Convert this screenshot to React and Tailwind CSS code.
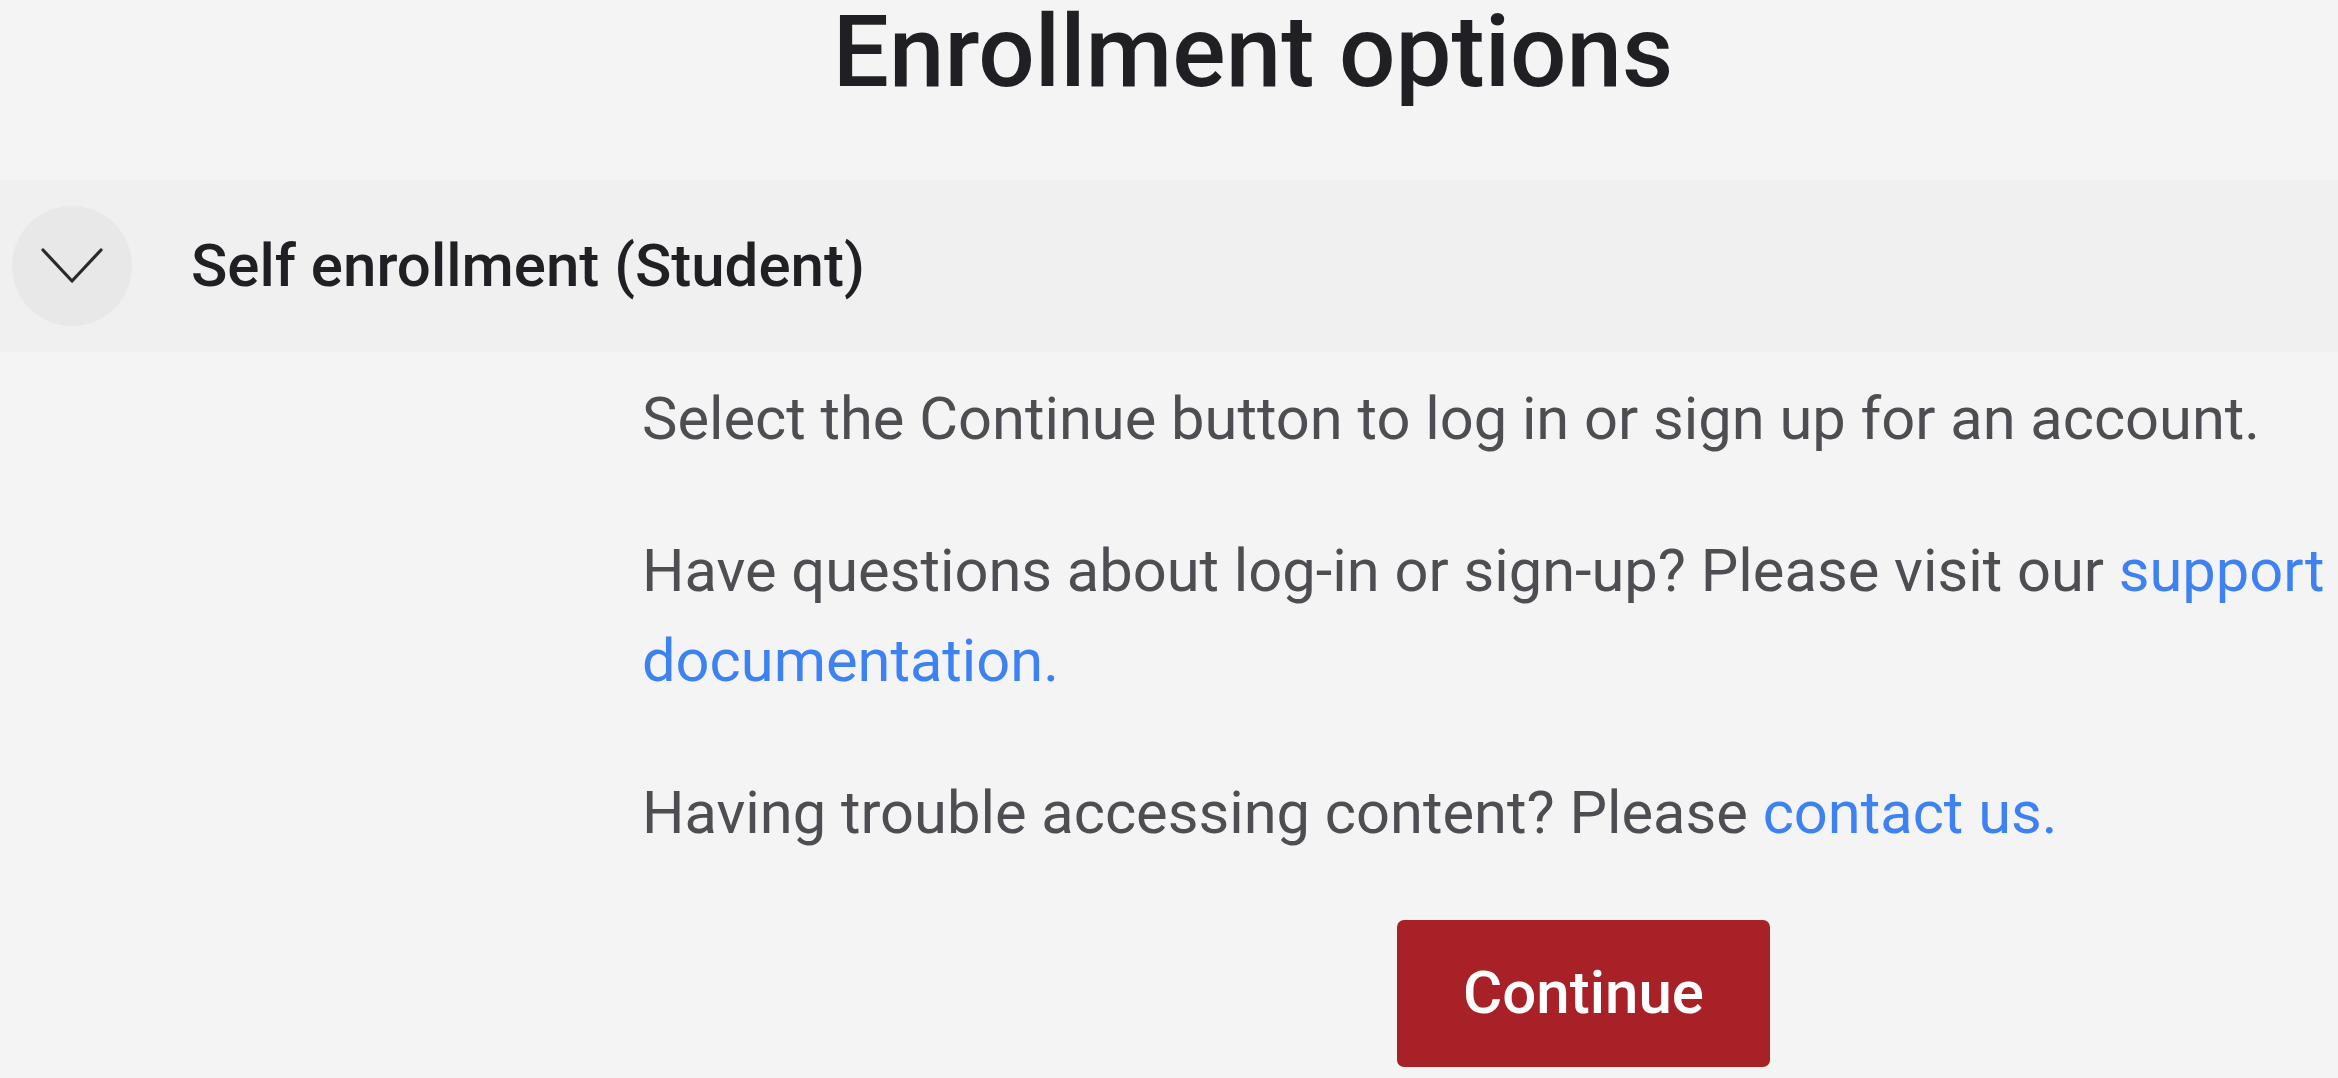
import React from "react";

const ChevronDown = () => (
  <svg width="62" height="36" viewBox="0 0 62 36" fill="none">
    <path d="M2 2 L31 33 L60 2" stroke="#2a2a2e" strokeWidth="3.2" strokeLinecap="round" strokeLinejoin="round" />
  </svg>
);

const App = () => {
  return (
    <div className="w-[2338px] h-[1078px] overflow-hidden bg-[#f4f4f4] font-['Roboto',sans-serif]">
      {/* page title */}
      <div className="flex justify-center pl-[168px] pt-[3px]">
        <h1 className="text-[99.6px] leading-none font-medium text-[#1f1f24]">Enrollment options</h1>
      </div>

      {/* accordion header */}
      <div className="mt-[77px] h-[172px] bg-[#f0f0f0] flex items-center pl-[12px]">
        <button className="w-[120px] h-[120px] rounded-full bg-[#e8e8e8] flex items-center justify-center">
          <ChevronDown />
        </button>
        <span className="ml-[59px] text-[60px] font-medium text-[#1f1f24]">Self enrollment (Student)</span>
      </div>

      {/* accordion body */}
      <div className="pl-[642px] pt-[22px] flex flex-col gap-[62px] text-[59.6px] leading-[90px] text-[#4d4d52]">
        <p>Select the Continue button to log in or sign up for an account.</p>
        <p>
          Have questions about log-in or sign-up? Please visit our{" "}
          <a href="#" className="text-[#3d82f0]">support documentation.</a>
        </p>
        <p>
          Having trouble accessing content? Please <a href="#" className="text-[#3d82f0]">contact us.</a>
        </p>
        <div className="pl-[755px]">
          <button className="w-[373px] h-[147px] rounded-[7px] bg-[#a82126] text-white text-[60px] font-medium">
            Continue
          </button>
        </div>
      </div>
    </div>
  );
};

export default App;
